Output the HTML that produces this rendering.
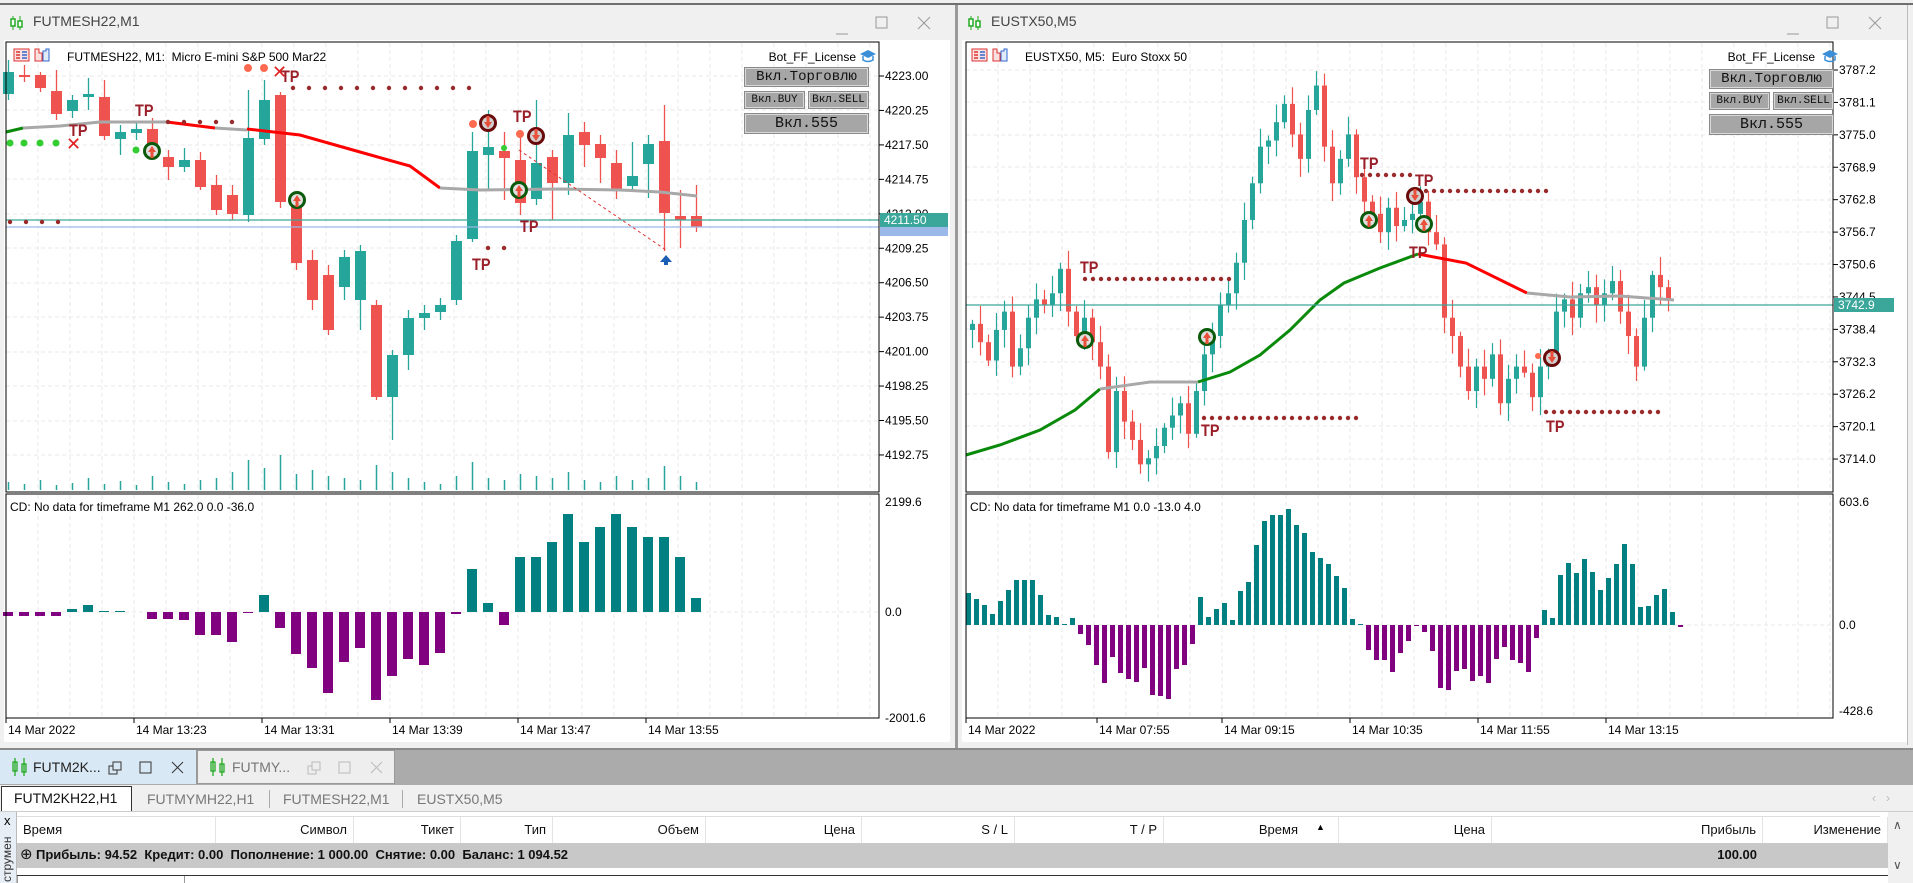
<!DOCTYPE html>
<html><head><meta charset="utf-8">
<style>
*{margin:0;padding:0;box-sizing:border-box}
body{width:1913px;height:883px;overflow:hidden;background:#f0f0f0;font-family:"Liberation Sans","DejaVu Sans",sans-serif;position:relative}
.abs{position:absolute}
.tb{font-size:14px;color:#444}
.btn{position:absolute;background:#a6a6a6;border:1px solid #d8d8d8;outline:1px solid #8a8a8a;font-family:"Liberation Mono","DejaVu Sans Mono",monospace;color:#111;text-align:center}
.hdr{position:absolute;top:817px;height:26px;font-size:13px;color:#111;line-height:26px;text-align:right;border-right:1px solid #e3e3e3}
</style></head><body>
<div class="abs" style="left:0;top:3px;width:1913px;height:2px;background:#6f6f6f"></div>
<div class="abs" style="left:955px;top:5px;width:3px;height:745px;background:#9a9a9a"></div>
<div class="abs" style="left:1907px;top:5px;width:1px;height:740px;background:#bbb"></div>
<div class="abs" style="left:0;top:748px;width:1913px;height:37px;background:#ababab;border-top:2px solid #8a8a8a"></div>

<svg class="abs" style="left:0;top:0" width="1913" height="883" id="sv"></svg>

<div class="abs tb" style="left:33px;top:13px">FUTMESH22,M1</div>
<div class="abs tb" style="left:991px;top:13px">EUSTX50,M5</div>

<div class="abs" style="left:700px;top:50px;width:156px;text-align:right;font-size:12px;color:#000">Bot_FF_License</div>
<div class="btn" style="left:745px;top:68px;width:123px;height:18px;font-size:14px;line-height:16px">Вкл.Торговлю</div>
<div class="btn" style="left:745px;top:92px;width:59px;height:16px;font-size:11px;line-height:14px">Вкл.BUY</div>
<div class="btn" style="left:809px;top:92px;width:59px;height:16px;font-size:11px;line-height:14px">Вкл.SELL</div>
<div class="btn" style="left:745px;top:114px;width:123px;height:19px;font-size:15px;line-height:17px">Вкл.555</div>
<div class="abs" style="left:1660px;top:50px;width:155px;text-align:right;font-size:12px;color:#000">Bot_FF_License</div>
<div class="btn" style="left:1710px;top:70px;width:123px;height:18px;font-size:14px;line-height:16px">Вкл.Торговлю</div>
<div class="btn" style="left:1710px;top:93px;width:59px;height:16px;font-size:11px;line-height:14px">Вкл.BUY</div>
<div class="btn" style="left:1774px;top:93px;width:59px;height:16px;font-size:11px;line-height:14px">Вкл.SELL</div>
<div class="btn" style="left:1710px;top:115px;width:123px;height:19px;font-size:15px;line-height:17px">Вкл.555</div>

<div class="abs" style="left:0;top:750px;width:197px;height:34px;background:#d9e8f5;border-right:1px solid #999"></div>
<div class="abs" style="left:197px;top:750px;width:198px;height:34px;background:#eeeeee;border:1px solid #999"></div>
<div class="abs" style="left:33px;top:759px;font-size:14px;color:#222">FUTM2K...</div>
<div class="abs" style="left:232px;top:759px;font-size:14px;color:#777">FUTMY...</div>
<svg class="abs" style="left:0;top:750px" width="400" height="34">
<g stroke="#2a2" fill="none" stroke-width="1.3"><path d="M15 8v18M24 8v18"/><rect x="13" y="12" width="4" height="9"/><rect x="22" y="14" width="4" height="8"/></g>
<g stroke="#2a2" fill="none" stroke-width="1.3"><path d="M213 8v18M222 8v18"/><rect x="211" y="12" width="4" height="9"/><rect x="220" y="14" width="4" height="8"/></g>
<g stroke="#333" fill="none"><rect x="109" y="16" width="8" height="8"/><rect x="113" y="12" width="8" height="8" fill="#d9e8f5"/><rect x="140" y="12" width="11" height="11"/><path d="M172 12l11 11M183 12l-11 11"/></g>
<g stroke="#bbb" fill="none"><rect x="308" y="16" width="8" height="8"/><rect x="312" y="12" width="8" height="8" fill="#eee"/><rect x="339" y="12" width="11" height="11"/><path d="M371 12l11 11M382 12l-11 11"/></g>
</svg>
<div class="abs" style="left:0;top:785px;width:1913px;height:27px;background:#f0f0f0;border-bottom:1px solid #ccc"></div>
<div class="abs" style="left:1px;top:786px;width:131px;height:25px;background:#fff;border:1px solid #333;border-bottom:none;font-size:14px;line-height:23px;padding-left:12px;color:#111">FUTM2KH22,H1</div>
<div class="abs" style="left:147px;top:791px;font-size:14px;color:#777">FUTMYMH22,H1</div>
<div class="abs" style="left:269px;top:790px;width:1px;height:18px;background:#aaa"></div>
<div class="abs" style="left:283px;top:791px;font-size:14px;color:#777">FUTMESH22,M1</div>
<div class="abs" style="left:402px;top:790px;width:1px;height:18px;background:#aaa"></div>
<div class="abs" style="left:417px;top:791px;font-size:14px;color:#777">EUSTX50,M5</div>
<div class="abs" style="left:1872px;top:791px;font-size:12px;color:#bbb">&#x2039;&nbsp;&nbsp;&nbsp;&#x203A;</div>
<div class="abs" style="left:0;top:812px;width:1913px;height:71px;background:#fff"></div>
<div class="abs" style="left:0;top:812px;width:17px;height:71px;background:#e8eef5;border-right:1px solid #bbb"></div>
<div class="abs" style="left:4px;top:813px;font-size:13px;color:#000">x</div>
<div class="abs" style="left:-18px;top:850px;font-size:12px;color:#333;transform:rotate(-90deg);width:50px">струмен</div>
<div class="abs" style="left:17px;top:816px;width:1863px;height:1px;background:#ddd"></div>
<div class="hdr" style="left:17px;width:199px;text-align:left;padding-left:6px">Время</div>
<div class="hdr" style="left:216px;width:138px;padding-right:6px">Символ</div>
<div class="hdr" style="left:354px;width:107px;padding-right:6px">Тикет</div>
<div class="hdr" style="left:461px;width:92px;padding-right:6px">Тип</div>
<div class="hdr" style="left:553px;width:153px;padding-right:6px">Объем</div>
<div class="hdr" style="left:706px;width:156px;padding-right:6px">Цена</div>
<div class="hdr" style="left:862px;width:153px;padding-right:6px">S / L</div>
<div class="hdr" style="left:1015px;width:149px;padding-right:6px">T / P</div>
<div class="hdr" style="left:1164px;width:175px;padding-right:40px">Время</div>
<div class="abs" style="left:1316px;top:822px;font-size:9px">&#9650;</div>
<div class="hdr" style="left:1339px;width:153px;padding-right:6px">Цена</div>
<div class="hdr" style="left:1492px;width:271px;padding-right:6px">Прибыль</div>
<div class="hdr" style="left:1763px;width:125px;padding-right:6px">Изменение</div>
<div class="abs" style="left:1888px;top:812px;width:25px;height:71px;background:#f0f0f0"></div>
<div class="abs" style="left:1893px;top:818px;font-size:12px;color:#555">&#x2227;</div>
<div class="abs" style="left:1893px;top:858px;font-size:12px;color:#555">&#x2228;</div>
<div class="abs" style="left:17px;top:843px;width:1871px;height:25px;background:#c8c8c8"></div>
<div class="abs" style="left:20px;top:845px;font-size:15px;color:#111">&#x2295;</div>
<div class="abs" style="left:36px;top:847px;font-size:13px;font-weight:bold;color:#111;white-space:pre">Прибыль: 94.52  Кредит: 0.00  Пополнение: 1 000.00  Снятие: 0.00  Баланс: 1 094.52</div>
<div class="abs" style="left:1650px;top:847px;width:107px;text-align:right;font-size:13px;font-weight:bold;color:#111">100.00</div>
<div class="abs" style="left:17px;top:875px;width:1871px;height:1px;background:#333"></div>
<div class="abs" style="left:17px;top:876px;width:168px;height:7px;border-left:1px solid #999;border-right:1px solid #999"></div>

<script>
var s='';
function R(x,y,w,h,f){s+='<rect x="'+x+'" y="'+y+'" width="'+w+'" height="'+h+'" fill="'+f+'"/>';}
function L(x1,y1,x2,y2,c,w,d){s+='<line x1="'+x1+'" y1="'+y1+'" x2="'+x2+'" y2="'+y2+'" stroke="'+c+'" stroke-width="'+(w||1)+'"'+(d?' stroke-dasharray="'+d+'"':'')+'/>';}
function T(x,y,t,sz,c,a,w){s+='<text x="'+x+'" y="'+y+'" font-size="'+sz+'" fill="'+(c||'#000')+'"'+(a?' text-anchor="'+a+'"':'')+(w?' font-weight="bold"':'')+' font-family="Liberation Sans, sans-serif">'+t+'</text>';}
function P(pts,c,w){s+='<polyline points="'+pts.map(function(p){return p.join(',')}).join(' ')+'" fill="none" stroke="'+c+'" stroke-width="'+w+'"/>';}
function C(x,y,r,f){s+='<circle cx="'+x+'" cy="'+y+'" r="'+r+'" fill="'+f+'"/>';}
function icon(x,y){L(x+3,y,x+3,y+14,'#2a2',1);s+='<rect x="'+(x+1)+'" y="'+(y+3)+'" width="4" height="7" fill="#fff" stroke="#2a2" stroke-width="1.5"/>';L(x+10,y,x+10,y+14,'#2a2',1);s+='<rect x="'+(x+8)+'" y="'+(y+5)+'" width="4" height="6" fill="#fff" stroke="#2a2" stroke-width="1.5"/>';}
function winbtn(x){L(x,34,x+12,34,'#999',1);s+='<rect x="'+(x+40)+'" y="17" width="11" height="11" fill="none" stroke="#999"/>';L(x+82,17,x+94,29,'#999',1);L(x+94,17,x+82,29,'#999',1);}
function chartIcons(x,y){s+='<rect x="'+x+'" y="'+y+'" width="15" height="12" fill="#fbe0e0" stroke="#d33"/>';for(var i=0;i<3;i++){L(x+2,y+3+i*3,x+6,y+3+i*3,'#d33',1.5);L(x+8,y+3+i*3,x+13,y+3+i*3,'#36c',1.5);}
 s+='<path d="M'+(x+21)+' '+(y)+'v12h7v-8h-3v-4z" fill="#fbe0e0" stroke="#d33"/><path d="M'+(x+29)+' '+(y+2)+'v10h6v-12h-3v2z" fill="#e0ecfb" stroke="#36c"/>';}
function cap(x,y){s+='<path d="M'+x+' '+(y+4)+'l8-4 8 4-8 4z" fill="#3a8fd6"/><path d="M'+(x+3)+' '+(y+6)+'v4q5 3 10 0v-4" fill="none" stroke="#3a8fd6" stroke-width="1.5"/>';}
function TP(x,y){s+='<text x="'+x+'" y="'+y+'" font-size="17" font-weight="bold" fill="#9a1f28" font-family="Liberation Sans Narrow, Liberation Sans, sans-serif" transform="translate('+x+' 0) scale(0.85 1) translate('+(-x)+' 0)">TP</text>';}
function dots(x1,x2,y,st){for(var x=x1;x<=x2;x+=st)C(x,y,2.2,'#9a2a2a');}
function mark(x,y,g){C(x,y,9,g?'#0b5a0b':'#6b0a0a');C(x,y,6,g?'#e0e0e0':'#d0d0d0');s+='<path d="M'+(x-4)+' '+(g?y+1:y-1)+'l4 '+(g?-6:6)+' 4 '+(g?6:-6)+'z" fill="#e8503a"/>';R(x-1.5,g?y:y-7,3,7,'#e8503a');}

R(4,40,946,702,'#fff');R(962,40,945,702,'#fff');
icon(10,16);icon(968,16);winbtn(836);winbtn(1787);

function chart(px0,px1,gstep,yl,il){
 for(var x=px0+gstep;x<px1;x+=gstep){L(x,43,x,491,'#e8e8e8',1,'4,3');L(x,495,x,717,'#e8e8e8',1,'4,3');}
 yl.forEach(function(y){L(px0,y,px1,y,'#e8e8e8',1,'4,3');});
 il.forEach(function(y){L(px0,y,px1,y,'#e8e8e8',1,'4,3');});
}
chart(6,879,32,[76,110,145,179,214,248,283,317,352,386,421,455],[612]);
chart(966,1833,32,[70,102,135,167,200,232,264,297,329,362,394,426,459],[625]);

var Lc=[[94,72,60,100],[75,75,65,82],[75,88,72,92],[91,114,70,120],[111,100,95,118],[97,94,78,110],[97,136,80,140],[139,132,125,155],[133,129,122,140],[129,145,118,150],[157,167,150,180],[167,160,148,172],[160,187,152,190],[185,210,175,215],[195,214,185,220],[215,138,90,222],[139,100,80,145],[95,202,92,208],[202,263,195,270],[260,300,250,310],[275,330,265,335],[287,257,250,300],[300,251,245,330],[305,397,300,400],[397,355,350,440],[355,318,310,370],[318,313,305,330],[312,305,298,320],[300,241,235,305],[239,151,132,242],[155,147,110,190],[151,158,132,200],[160,203,130,215],[199,163,100,205],[157,183,150,220],[183,135,113,195],[132,145,122,167],[144,158,135,183],[163,189,150,199],[186,176,142,190],[164,144,135,198],[141,213,105,251],[216,220,190,248],[216,227,185,232]];
var Lvol=[8,6,10,5,7,12,6,9,5,14,8,6,10,12,18,30,22,35,16,20,14,12,10,25,18,12,8,6,14,28,12,10,16,14,12,18,10,8,14,10,12,24,14,8];
Lc.forEach(function(c,i){var x=8+16*i,up=c[1]<c[0],col=up?'#26a69a':'#ef5350';
 L(x+0.5,c[2],x+0.5,c[3],col,1.3);var t=Math.min(c[0],c[1]),h=Math.max(2,Math.abs(c[0]-c[1]));R(x-5,t,11,h,col);
 L(x+0.5,490,x+0.5,490-Lvol[i],'#26a69a',1.5);});
P([[6,132],[23,128]],'#0a8a0a',3);
P([[23,128],[60,126],[100,122],[167,122]],'#a8a8a8',3);
P([[167,122],[215,128]],'#ff0000',3);P([[215,128],[247,130]],'#a8a8a8',3);
P([[247,129],[300,135],[360,152],[410,166],[440,188]],'#ff0000',3);
P([[440,188],[480,190],[560,189],[620,190],[660,192],[697,196]],'#a8a8a8',3);
L(6,220,879,220,'#3aa79a',1.2);L(6,227,879,227,'#9ab9e8',1.2);
dots(293,477,88,16);dots(168,232,122,16);dots(10,73,222,16);dots(488,504,248,16);
[[10,143],[24,143],[40,143],[56,143],[136,150]].forEach(function(p){C(p[0],p[1],3.5,'#33cc33');});
C(248,68,4,'#ff6a50');C(264,68,4,'#ff6a50');C(473,124,4,'#ff6a50');C(520,134,4,'#ff6a50');C(504,148,3,'#33cc33');
s+='<text x="66" y="150" font-size="18" font-weight="bold" fill="#e02020">✕</text><text x="272" y="78" font-size="18" font-weight="bold" fill="#e02020">✕</text>';
TP(69,136);TP(135,116);TP(281,82);TP(472,270);TP(513,122);TP(520,232);
mark(152,151,1);mark(297,200,1);mark(519,190,1);mark(488,123,0);mark(536,136,0);
L(519,150,666,250,'#e03030',1,'3,3');s+='<path d="M660 262h12l-6-7z" fill="#1a5fb4"/><rect x="664" y="261" width="4" height="4" fill="#1a5fb4"/>';
var Li=[-4,-4,-4,-4,3,7,1,1,0,-7,-7,-8,-23,-23,-30,-1,17,-16,-42,-56,-81,-50,-36,-88,-64,-47,-53,-41,-2,43,9,-13,55,55,70,98,70,85,98,85,75,75,55,14];
Li.forEach(function(v,i){var x=8+16*i;if(v>0)R(x-5,612-v,10,v,'#008080');else if(v<0)R(x-5,612,10,-v,'#800080');});

var Rp=[265,280,295,270,255,300,285,260,245,250,240,220,255,275,260,280,300,370,320,345,360,380,375,365,350,340,330,355,320,290,275,250,240,215,180,150,120,115,100,85,110,130,90,70,120,150,130,110,145,165,175,190,170,185,180,175,165,190,200,260,275,300,320,300,310,290,330,310,300,305,325,300,290,255,245,260,240,235,250,240,230,255,275,300,260,225,235,245];
var prev=270*1.222;
Rp.forEach(function(v,i){var c=v*1.222,o=prev,x=972+8*i,up=c<o,col=up?'#26a69a':'#ef5350';
 var hi=Math.min(o,c)-4-Math.abs(Math.sin(i*1.7))*14,lo=Math.max(o,c)+4+Math.abs(Math.cos(i*2.3))*14;
 L(x+0.5,hi,x+0.5,lo,col,1.2);R(x-2,Math.min(o,c),5,Math.max(2,Math.abs(o-c)),col);prev=c;});
P([[966,455],[1000,445],[1040,430],[1075,410],[1100,389]],'#0a8a0a',3);
P([[1100,389],[1150,382],[1198,382]],'#a8a8a8',3);
P([[1198,382],[1230,372],[1260,355],[1290,330],[1320,300],[1344,283],[1380,268],[1418,254]],'#0a8a0a',3);
P([[1418,254],[1466,263],[1527,293]],'#ff0000',3);
P([[1527,293],[1570,297],[1620,296],[1674,300]],'#a8a8a8',3);
L(966,305,1833,305,'#3aa79a',1.2);
dots(1085,1234,279,8);dots(1362,1411,175,8);dots(1418,1546,191,8);dots(1204,1362,418,8);dots(1546,1664,412,8);
TP(1080,273);TP(1360,169);TP(1415,186);TP(1409,258);TP(1201,436);TP(1546,432);
mark(1085,340,1);mark(1207,337,1);mark(1369,220,1);mark(1424,224,1);mark(1415,196,0);mark(1552,358,0);
C(1538,356,3,'#ff6a50');
var Ri=[32,26,20,11,24,35,45,45,45,30,10,8,1,7,-9,-20,-40,-58,-32,-48,-54,-57,-43,-70,-71,-74,-44,-40,-19,28,8,16,22,5,34,43,80,104,110,110,116,100,92,73,67,61,49,37,6,1,-25,-35,-35,-47,-28,-16,-1,-7,-26,-63,-65,-46,-44,-56,-51,-58,-34,-22,-35,-38,-47,-13,15,7,50,62,52,66,53,35,47,61,81,61,18,19,30,36,13,-2];
Ri.forEach(function(v,i){var x=968+8*i;if(v>0)R(x-2,625-v,5,v,'#008080');else if(v<0)R(x-2,625,5,-v,'#800080');});

function frame(px0,px1){s+='<rect x="'+px0+'" y="42" width="'+(px1-px0)+'" height="450" fill="none" stroke="#000"/>';s+='<rect x="'+px0+'" y="494" width="'+(px1-px0)+'" height="224" fill="none" stroke="#000"/>';}
frame(6,879);frame(966,1833);
var lp=['4223.00','4220.25','4217.50','4214.75','4212.00','4209.25','4206.50','4203.75','4201.00','4198.25','4195.50','4192.75'];
lp.forEach(function(t,k){var y=76+34.45*k;L(879,y,884,y,'#000');T(885,y+4,t,12);});
var rp=['3787.2','3781.1','3775.0','3768.9','3762.8','3756.7','3750.6','3744.5','3738.4','3732.3','3726.2','3720.1','3714.0'];
rp.forEach(function(t,k){var y=70+32.42*k;L(1833,y,1838,y,'#000');T(1839,y+4,t,12);});
R(880,213,68,14,'#3aa79a');T(884,224,'4211.50',12,'#fff');R(880,227,68,9,'#9ab9e8');
R(1834,298,60,14,'#3aa79a');T(1838,309,'3742.9',12,'#fff');
T(885,506,'2199.6',12);T(885,616,'0.0',12);T(885,722,'-2001.6',12);
T(1839,506,'603.6',12);T(1839,629,'0.0',12);T(1839,715,'-428.6',12);
['14 Mar 2022','14 Mar 13:23','14 Mar 13:31','14 Mar 13:39','14 Mar 13:47','14 Mar 13:55'].forEach(function(t,k){var x=6+128*k;L(x,718,x,723,'#000');T(x+2,734,t,12);});
['14 Mar 2022','14 Mar 07:55','14 Mar 09:15','14 Mar 10:35','14 Mar 11:55','14 Mar 13:15'].forEach(function(t,k){var x=[966,1097,1222,1350,1478,1606][k];L(x,718,x,723,'#000');T(x+2,734,t,12);});
chartIcons(14,49);T(67,61,'FUTMESH22, M1:&#160; Micro E-mini S&amp;P 500 Mar22',12);
chartIcons(972,49);T(1025,61,'EUSTX50, M5:&#160; Euro Stoxx 50',12);
cap(860,50);cap(1822,50);
T(10,511,'CD: No data for timeframe M1 262.0 0.0 -36.0',12);
T(970,511,'CD: No data for timeframe M1 0.0 -13.0 4.0',12);
document.getElementById('sv').innerHTML=s;
</script>
</body></html>
